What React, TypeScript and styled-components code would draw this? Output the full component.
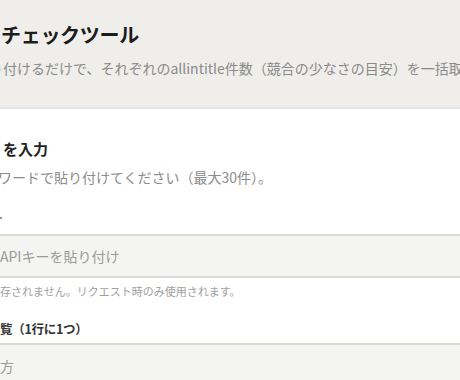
import React from "react";
import styled, { createGlobalStyle } from "styled-components";

const Global = createGlobalStyle`
  html, body { margin: 0; padding: 0; background: #ffffff; overflow: hidden; }
  body { font-family: "Noto Sans CJK JP", "Noto Sans", sans-serif; width: 460px; height: 380px; }
`;

const Page = styled.div`
  width: 460px;
  height: 380px;
  overflow: hidden;
  display: flex;
  flex-direction: column;
`;

const Header = styled.header`
  background: #efeeeb;
  padding: 20px 0 29px;
  border-bottom: 2px solid #e6e5e1;
  white-space: nowrap;
  overflow: hidden;
`;

const Title = styled.h1`
  margin: 0;
  font-size: 20px;
  line-height: 30px;
  font-weight: 600;
  color: #1c1c1c;
  padding-left: 1px;
  letter-spacing: -0.3px;
`;

const Lead = styled.p`
  margin: 8px 0 0;
  font-size: 14px;
  line-height: 20px;
  color: #8a8a8a;
  margin-left: -11px;
`;

const Card = styled.section`
  background: #ffffff;
  padding: 29px 0 0;
  white-space: nowrap;
  overflow: hidden;
  flex: 1;
`;

const SectionTitle = styled.h2`
  margin: 0;
  font-size: 15px;
  line-height: 22px;
  font-weight: 700;
  color: #222;
  padding-left: 3px;
`;

const SectionNote = styled.p`
  margin: 7px 0 0;
  font-size: 14px;
  line-height: 20px;
  color: #8c8c8c;
  margin-left: -2px;
`;

const Field = styled.div<{ $gap: number }>`
  margin-top: ${(p) => p.$gap}px;
  display: flex;
  flex-direction: column;
`;

const Label = styled.label`
  font-size: 12.5px;
  line-height: 20px;
  font-weight: 700;
  color: #333;
  letter-spacing: -0.3px;
`;

const LabelTail = styled.span`
  display: inline-block;
  width: 2px;
  height: 2px;
  margin-top: 9px;
  background: #777;
  border-radius: 1px;
  vertical-align: top;
`;

const Input = styled.div`
  margin: 6px -10px 0;
  height: 40px;
  background: #f4f4f2;
  border-top: 2px solid #dadad6;
  border-bottom: 2px solid #dadad6;
  display: flex;
  align-items: center;
  padding-left: 10px;
  font-size: 14px;
  color: #9a9a9a;
`;

const Help = styled.p`
  margin: 5px 0 0;
  font-size: 11px;
  line-height: 16px;
  color: #a0a0a0;
`;

const Textarea = styled.div`
  margin: 4px -10px 0;
  height: 60px;
  background: #f4f4f2;
  border-top: 2px solid #dadad6;
  padding: 11px 0 0 10px;
  font-size: 14px;
  line-height: 20px;
  color: #9a9a9a;
`;

export default function App() {
  return (
    <>
      <Global />
      <Page>
        <Header>
          <Title>チェックツール</Title>
          <Lead>り付けるだけで、それぞれのallintitle件数（競合の少なさの目安）を一括取得します</Lead>
        </Header>
        <Card>
          <SectionTitle>を入力</SectionTitle>
          <SectionNote>ワードで貼り付けてください（最大30件）。</SectionNote>
          <Field $gap={21}>
            <Label>
              <LabelTail />
            </Label>
            <Input>APIキーを貼り付け</Input>
            <Help>存されません。リクエスト時のみ使用されます。</Help>
          </Field>
          <Field $gap={20}>
            <Label>覧（1行に1つ）</Label>
            <Textarea>方</Textarea>
          </Field>
        </Card>
      </Page>
    </>
  );
}
